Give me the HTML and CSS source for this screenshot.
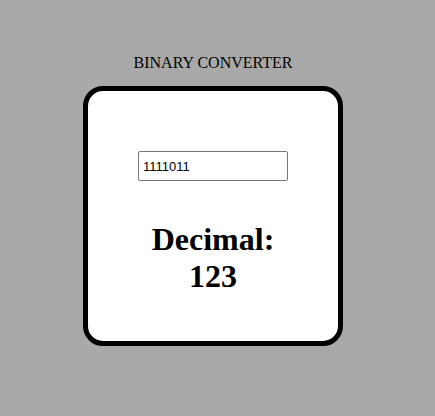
FILE: index.html
```html
<!DOCTYPE html>
<html>
<head>
<meta charset="utf-8">
<link rel="stylesheet" href="styles.css">
</head>
<body>
<div class="page">
  <div class="title">BINARY CONVERTER</div>
  <div class="card">
    <input class="binary" type="text" value="1111011">
    <h1 class="result">Decimal:<br>123</h1>
  </div>
</div>
</body>
</html>
```
FILE: styles.css
```css
html, body {
  margin: 0;
  padding: 0;
  background: #a9a9a9;
  font-family: "Liberation Serif", "Times New Roman", serif;
}
.page {
  width: 426px;
  display: flex;
  flex-direction: column;
  align-items: center;
  padding-top: 54px;
}
.title {
  font-size: 16px;
  line-height: 18px;
  color: #000;
}
.card {
  margin-top: 14px;
  box-sizing: border-box;
  width: 260px;
  height: 260px;
  border: 5px solid #000;
  border-radius: 20px;
  background: #fff;
  display: flex;
  flex-direction: column;
  align-items: center;
  padding-top: 60px;
}
.binary {
  box-sizing: border-box;
  width: 150px;
  height: 30px;
  border: 1px solid #767676;
  border-radius: 2px;
  padding: 1px 4px;
  font-family: "Liberation Sans", Arial, sans-serif;
  font-size: 13px;
  color: #000;
  background: #fff;
}
.result {
  margin: 40px 0 0;
  font-size: 32px;
  line-height: 37px;
  font-weight: bold;
  text-align: center;
}
```
